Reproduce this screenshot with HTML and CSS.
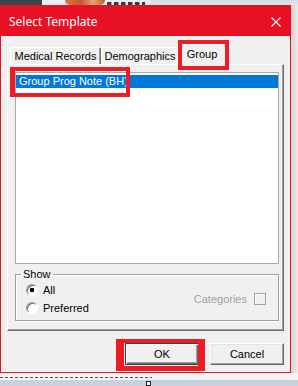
FILE: index.html
```
<!DOCTYPE html>
<html>
<head>
<meta charset="utf-8">
<link rel="stylesheet" href="styles.css">
</head>
<body>
<div class="desk-top">
  <div class="dt-dark"></div>
  <div class="dt-logo"><span class="logo-mark"></span><span class="logo-text"></span></div>
  <div class="dt-rest"></div>
</div>
<div class="desk-mid">
  <div class="window">
    <div class="titlebar">
      <span class="title">Select Template</span>
      <svg class="close" width="10" height="10" viewBox="0 0 10 10"><path d="M0.5 0.5L9.5 9.5M9.5 0.5L0.5 9.5" stroke="#fff" stroke-width="1.1" fill="none"/></svg>
    </div>
    <div class="content">
      <div class="tabs">
        <div class="tab tab-med">Medical Records</div>
        <div class="tab tab-demo">Demographics</div>
        <div class="tab tab-group active">Group<span class="mark mark-tab"></span></div>
      </div>
      <div class="panel">
        <div class="listbox">
          <div class="row selected">Group Prog Note (BH)<span class="mark mark-row"></span></div>
        </div>
        <fieldset class="show">
          <legend>Show</legend>
          <div class="show-body">
            <div class="radios">
              <div class="radio-row"><span class="radio checked"></span>All</div>
              <div class="radio-row"><span class="radio"></span>Preferred</div>
            </div>
            <div class="categories">Categories<span class="checkbox"></span></div>
          </div>
        </fieldset>
      </div>
      <div class="buttons">
        <div class="btn-wrap"><button class="btn default">OK</button><span class="mark mark-ok"></span></div>
        <div class="btn-wrap"><button class="btn">Cancel</button></div>
      </div>
    </div>
  </div>
  <div class="shadow"></div>
</div>
<div class="desk-bottom">
  <div class="dash"></div>
  <div class="strip"><span class="handle"></span></div>
</div>
</body>
</html>
```
FILE: styles.css
```
html, body {
  margin: 0;
  padding: 0;
}
body {
  width: 298px;
  height: 386px;
  overflow: hidden;
  background: #f3f3f3;
  font-family: "Liberation Sans", Arial, sans-serif;
  font-size: 11px;
  color: #000;
}

/* desktop behind dialog */
.desk-top {
  display: flex;
  height: 5px;
}
.dt-dark {
  width: 42px;
  background: #3d434a;
}
.dt-logo {
  width: 108px;
  display: flex;
  gap: 2px;
  padding-left: 23px;
  box-sizing: border-box;
  background: #eceef0;
}
.logo-mark {
  width: 40px;
  background: linear-gradient(to right, #d9773f, #c8562a 40%, #e0a47c 70%, #c65a2e);
  border-radius: 0 0 6px 6px;
}
.logo-text {
  width: 38px;
  background: repeating-linear-gradient(to right, #3a3a3a 0 4px, #9a9a9a 4px 5px, #eceef0 5px 7px);
  height: 3px;
  margin-top: 2px;
}
.dt-rest {
  flex: 1;
  background: linear-gradient(#d7dde5, #e4e7eb);
}

.desk-mid {
  display: flex;
  height: 368px;
}

/* dialog window */
.window {
  width: 291px;
  box-sizing: border-box;
  border: 1px solid #e81123;
  background: #f0f0f0;
  display: flex;
  flex-direction: column;
}
.titlebar {
  height: 30px;
  flex: none;
  background: #e81123;
  display: flex;
  align-items: center;
  justify-content: space-between;
  padding: 0 9px 0 8px;
  color: #fff;
  font-family: "Noto Sans", "Open Sans", sans-serif;
  font-size: 12px;
}
.title {
  margin-top: 1px;
}
.close {
  display: block;
  margin-top: 1px;
}

.content {
  padding: 8px 6px 0 6px;
}

/* tabs */
.tabs {
  display: flex;
  align-items: flex-end;
  height: 20px;
  margin-left: 3px;
}
.tab {
  height: 17px;
  box-sizing: border-box;
  border: 1px solid;
  border-bottom: none;
  border-color: #fff #696969 transparent #fff;
  box-shadow: inset -1px 0 #a0a0a0;
  border-radius: 2px 2px 0 0;
  line-height: 16px;
  text-align: center;
  background: #f0f0f0;
  white-space: nowrap;
}
.tab-med { width: 91px; }
.tab-demo { width: 78px; }
.tab-group { width: 50px; }
.tab.active {
  height: 21px;
  margin-left: -2px;
  margin-bottom: -1px;
  position: relative;
  z-index: 1;
  line-height: 18px;
}

/* red annotation boxes */
.mark {
  position: absolute;
  box-sizing: border-box;
  border: 4px solid #ed1c24;
  pointer-events: none;
}
.mark-tab {
  left: 0px;
  top: -5px;
  width: 51px;
  height: 30px;
}
.mark-row {
  left: -6px;
  top: -8px;
  width: 120px;
  height: 30px;
  border-left-width: 5px;
}
.mark-ok {
  left: -9px;
  top: -4px;
  width: 89px;
  height: 32px;
  border-width: 4px 7px 5px 8px;
}

/* panel */
.panel {
  height: 267px;
  box-sizing: border-box;
  border: 1px solid;
  border-color: #fff #696969 #696969 #fff;
  box-shadow: inset -1px -1px #a0a0a0;
  padding: 7px 4px 0 7px;
}
.listbox {
  height: 192px;
  box-sizing: border-box;
  border: 1px solid #a9a9a9;
  background: #fff;
  padding-top: 2px;
}
.row {
  height: 13px;
  line-height: 13px;
  padding-left: 3px;
  position: relative;
  white-space: nowrap;
}
.row.selected {
  background: #0078d7;
  color: #fff;
}

/* show group */
.show {
  margin: 4px 0 0 0;
  padding: 0 0 3px 10px;
  border: 1px solid #a0a0a0;
  box-shadow: inset 1px 1px #fff, 1px 1px #fff;
  min-inline-size: 0;
}
.show legend {
  padding: 0 2px;
  margin-left: -5px;
  line-height: 13px;
}
.show-body {
  display: flex;
  align-items: center;
  justify-content: space-between;
  padding-right: 12px;
}
.radio-row {
  display: flex;
  align-items: center;
  gap: 5px;
  height: 18px;
}
.radio {
  width: 12px;
  height: 12px;
  box-sizing: border-box;
  border-radius: 50%;
  border: 1px solid;
  border-color: #a0a0a0 #fff #fff #a0a0a0;
  box-shadow: inset 1px 1px #696969;
  background: #fff;
}
.radio.checked {
  background: radial-gradient(circle at 50% 50%, #000 0 2px, #fff 2.6px);
}
.categories {
  display: flex;
  align-items: center;
  gap: 7px;
  color: #a0a0a0;
}
.checkbox {
  width: 12px;
  height: 12px;
  box-sizing: border-box;
  border: 1px solid #a0a0a0;
  box-shadow: inset 1px 1px #fff;
}

/* buttons */
.buttons {
  display: flex;
  justify-content: flex-end;
  gap: 11px;
  margin-top: 12px;
}
.btn-wrap {
  position: relative;
  display: flex;
}
.btn {
  width: 74px;
  height: 22px;
  margin: 0;
  padding: 0;
  font: inherit;
  color: #000;
  background: #f0f0f0;
  border: 1px solid;
  border-color: #fff #696969 #696969 #fff;
  box-shadow: inset -1px -1px #a0a0a0, inset 1px 1px #e3e3e3;
}
.btn.default {
  border-color: #404040;
  box-shadow: inset 1px 1px #fff, inset -1px -1px #696969, inset -2px -2px #a0a0a0;
}

.shadow {
  width: 7px;
  background: linear-gradient(to right, #d4d4d4, #ebebeb);
}

/* desktop below */
.desk-bottom {
  height: 13px;
  background: #f4f4f4;
  overflow: hidden;
}
.dash {
  margin-top: 4px;
  width: 152px;
  height: 1px;
  background: repeating-linear-gradient(to right, #555 0 3px, transparent 3px 5px);
}
.strip {
  margin-top: 2px;
  height: 6px;
  background: #c8d1dd;
  display: flex;
}
.handle {
  margin-left: 146px;
  margin-top: 1px;
  width: 3px;
  height: 3px;
  border: 1px solid #222;
  background: #fff;
}
```
